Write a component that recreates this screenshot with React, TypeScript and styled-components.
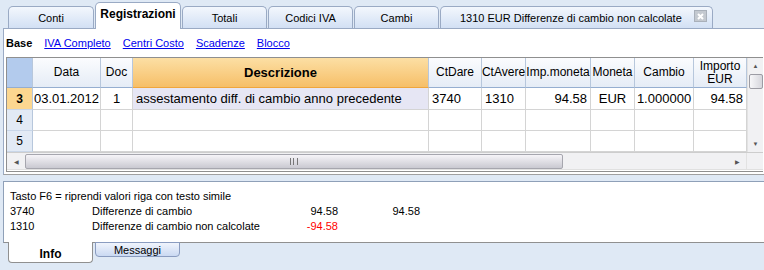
import React from 'react';
import styled, { createGlobalStyle, css } from 'styled-components';

const GlobalStyle = createGlobalStyle`
 html, body {
  margin: 0;
  padding: 0;
  background: #dfe9f5;
 }
 body {
  font-family: "Liberation Sans", Arial, sans-serif;
  color: #000;
 }
`;

const Screen = styled.div`
 width: 764px;
 height: 270px;
 overflow: hidden;
 background: #dfe9f5;
 display: flex;
 flex-direction: column;
`;

const TabBar = styled.div`
 display: flex;
 align-items: flex-end;
 height: 28px;
 padding-left: 8px;
 gap: 1px;
`;

const Tab = styled.div<{ $active?: boolean; $width: number }>`
 position: relative;
 box-sizing: border-box;
 width: ${p => p.$width}px;
 height: 22px;
 display: flex;
 align-items: center;
 justify-content: center;
 font-size: 11px;
 border: 1px solid #9aaac4;
 border-bottom: none;
 border-radius: 5px 5px 0 0;
 background: linear-gradient(#f3f7fd, #d2e0f4);
 ${p =>
  p.$active &&
  css`
   height: 27px;
   margin-bottom: -1px;
   background: #fff;
   font-weight: bold;
   font-size: 12px;
   padding-bottom: 4px;
   z-index: 1;
  `}
`;

const CloseBox = styled.span`
 position: absolute;
 right: 5px;
 top: 3px;
 width: 13px;
 height: 12px;
 box-sizing: border-box;
 border: 1px solid #a9b0ba;
 background: #c4c9d0;
 display: flex;
 align-items: center;
 justify-content: center;
`;

const Panel = styled.div`
 margin-left: 3px;
 height: 145px;
 background: #fff;
 border-top: 1px solid #9aaac4;
 border-left: 1px solid #9aaac4;
 border-bottom: 1px solid #a0a0a0;
 display: flex;
 flex-direction: column;
`;

const LinkBar = styled.div`
 display: flex;
 align-items: center;
 height: 28px;
 padding-left: 2px;
 gap: 12px;
 font-size: 11px;
`;

const BaseLabel = styled.span`
 font-weight: bold;
`;

const Link = styled.span`
 color: #0000ee;
 text-decoration: underline;
`;

const GridBox = styled.div`
 margin-left: 2px;
 width: 757px;
 height: 115px;
 box-sizing: border-box;
 border: 1px solid #8f8f8f;
 border-right: none;
 display: flex;
 flex-direction: column;
`;

const GridBody = styled.div`
 display: flex;
 height: 94px;
`;

const Table = styled.div`
 display: grid;
 grid-template-columns: 26px 68px 32px 296px 53px 44px 65px 44px 59px 53px;
 grid-template-rows: 30px 22px 21px 21px;
 width: 740px;
`;

const HeadCell = styled.div<{ $current?: boolean; $corner?: boolean }>`
 box-sizing: border-box;
 display: flex;
 align-items: center;
 justify-content: center;
 text-align: center;
 font-size: 12px;
 line-height: 13px;
 border-right: 1px solid #b7c7dc;
 border-bottom: 1px solid #95aed0;
 background: linear-gradient(#fbfcfe, #e5ecf6);
 ${p =>
  p.$current &&
  css`
   background: linear-gradient(#fcdfa4, #f6bf68);
   border-bottom: 1px solid #f0a63c;
   font-weight: bold;
   font-size: 13px;
  `}
 ${p =>
  p.$corner &&
  css`
   background: #b3cbed;
  `}
`;

const RowHead = styled.div<{ $current?: boolean }>`
 box-sizing: border-box;
 display: flex;
 align-items: center;
 justify-content: center;
 font-size: 12px;
 background: ${p => (p.$current ? '#fcd790' : '#e2eaf5')};
 font-weight: ${p => (p.$current ? 'bold' : 'normal')};
 border-bottom: 1px solid #c9d6e8;
 border-right: 1px solid #b7c7dc;
`;

const Cell = styled.div<{ $align?: 'left' | 'right' | 'center'; $focus?: boolean }>`
 box-sizing: border-box;
 display: flex;
 align-items: center;
 padding: 0 3px;
 font-size: 13px;
 white-space: nowrap;
 overflow: hidden;
 justify-content: ${p =>
  p.$align === 'right' ? 'flex-end' : p.$align === 'center' ? 'center' : 'flex-start'};
 background: ${p => (p.$focus ? '#e6e6f4' : '#fff')};
 border-right: 1px solid #d4d4d4;
 border-bottom: 1px solid #d4d4d4;
`;

const VScroll = styled.div`
 width: 16px;
 display: flex;
 flex-direction: column;
 align-items: center;
 background: #f1f1f3;
 border-left: 1px solid #e2e2e2;
`;

const Arrow = styled.div`
 height: 16px;
 display: flex;
 align-items: center;
 justify-content: center;
 font-size: 6px;
 color: #555;
`;

const VThumb = styled.div`
 width: 14px;
 height: 15px;
 box-sizing: border-box;
 border: 1px solid #9c9ca4;
 border-radius: 2px;
 background: linear-gradient(90deg, #f7f7f9, #d6d6dc);
`;

const VTrack = styled.div`
 flex: 1;
`;

const HScrollRow = styled.div`
 display: flex;
 height: 16px;
 border-top: 1px solid #cdcdcd;
 border-bottom: 1px solid #e0e0e0;
`;

const HScroll = styled.div`
 flex: 1;
 display: flex;
 align-items: center;
 background: #f1f1f3;
`;

const HThumb = styled.div`
 width: 538px;
 height: 15px;
 box-sizing: border-box;
 border: 1px solid #a6a6ae;
 border-radius: 2px;
 background: linear-gradient(#f6f4f8, #c9c9d1);
 display: flex;
 align-items: center;
 justify-content: center;
`;

const Grip = styled.span`
 width: 6px;
 height: 7px;
 border-left: 1px solid #777;
 border-right: 1px solid #777;
 position: relative;
 &::after {
  content: '';
  position: absolute;
  left: 2px;
  top: 0;
  height: 7px;
  border-left: 1px solid #777;
 }
`;

const HArrow = styled.div`
 width: 18px;
 display: flex;
 align-items: center;
 justify-content: center;
 font-size: 6px;
 color: #555;
`;

const Corner = styled.div`
 width: 16px;
 background: #f1f1f3;
 border-left: 1px solid #e2e2e2;
`;

const Gap = styled.div`
 height: 6px;
`;

const InfoPanel = styled.div`
 margin-left: 3px;
 height: 62px;
 box-sizing: border-box;
 background: #fff;
 border-top: 1px solid #8fa0b8;
 border-left: 1px solid #8fa0b8;
 border-bottom: 1px solid #909090;
 padding: 6px 0 0 6px;
 font-size: 11px;
`;

const InfoLine = styled.div`
 display: grid;
 grid-template-columns: 82px 170px 76px 82px;
 height: 15px;
 align-items: center;
`;

const Amount = styled.span<{ $neg?: boolean }>`
 text-align: right;
 color: ${p => (p.$neg ? '#ff0000' : '#000')};
`;

const BottomTabs = styled.div`
 display: flex;
 padding-left: 8px;
 gap: 2px;
 margin-top: -1px;
`;

const BottomTab = styled.div<{ $active?: boolean }>`
 box-sizing: border-box;
 width: 85px;
 height: ${p => (p.$active ? 21 : 15)}px;
 display: flex;
 align-items: center;
 justify-content: center;
 font-size: ${p => (p.$active ? 12 : 11)}px;
 font-weight: ${p => (p.$active ? 'bold' : 'normal')};
 padding-top: ${p => (p.$active ? 3 : 0)}px;
 background: ${p => (p.$active ? '#fff' : 'linear-gradient(#f0f4fc, #cad9f2)')};
 border: 1px solid ${p => (p.$active ? '#909090' : '#8a9cc0')};
 border-top: ${p => (p.$active ? 'none' : '1px solid #8a9cc0')};
 border-radius: 0 0 4px 4px;
`;

const topTabs = [
 { label: 'Conti', width: 86 },
 { label: 'Registrazioni', width: 86, active: true },
 { label: 'Totali', width: 85 },
 { label: 'Codici IVA', width: 85 },
 { label: 'Cambi', width: 85 },
];

const columns = ['Data', 'Doc', 'Descrizione', 'CtDare', 'CtAvere', 'Imp.moneta', 'Moneta', 'Cambio'];

const App: React.FC = () => {
 return (
  <Screen>
   <GlobalStyle />
   <TabBar>
    {topTabs.map(t => (
     <Tab key={t.label} $width={t.width} $active={t.active}>
      {t.label}
     </Tab>
    ))}
    <Tab $width={273} style={{ justifyContent: 'flex-start', paddingLeft: 19 }}>
     1310 EUR Differenze di cambio non calcolate
     <CloseBox>
      <svg width="7" height="7" viewBox="0 0 7 7">
       <path d="M1 1L6 6M6 1L1 6" stroke="#fff" strokeWidth="2" />
      </svg>
     </CloseBox>
    </Tab>
   </TabBar>
   <Panel>
    <LinkBar>
     <BaseLabel>Base</BaseLabel>
     <Link>IVA Completo</Link>
     <Link>Centri Costo</Link>
     <Link>Scadenze</Link>
     <Link>Blocco</Link>
    </LinkBar>
    <GridBox>
     <GridBody>
      <Table>
       <HeadCell $corner />
       {columns.map(c => (
        <HeadCell key={c} $current={c === 'Descrizione'}>
         {c}
        </HeadCell>
       ))}
       <HeadCell>
        Importo
        <br />
        EUR
       </HeadCell>

       <RowHead $current>3</RowHead>
       <Cell $align="center">03.01.2012</Cell>
       <Cell $align="center">1</Cell>
       <Cell $focus>assestamento diff. di cambio anno precedente</Cell>
       <Cell>3740</Cell>
       <Cell>1310</Cell>
       <Cell $align="right">94.58</Cell>
       <Cell $align="center">EUR</Cell>
       <Cell $align="center">1.000000</Cell>
       <Cell $align="right">94.58</Cell>

       {[4, 5].map(n => (
        <React.Fragment key={n}>
         <RowHead>{n}</RowHead>
         {Array.from({ length: 9 }).map((_, i) => (
          <Cell key={i} />
         ))}
        </React.Fragment>
       ))}
      </Table>
      <VScroll>
       <Arrow>▲</Arrow>
       <VThumb />
       <VTrack />
       <Arrow>▼</Arrow>
      </VScroll>
     </GridBody>
     <HScrollRow>
      <HScroll>
       <HArrow>◀</HArrow>
       <HThumb>
        <Grip />
       </HThumb>
       <VTrack />
       <HArrow>▶</HArrow>
      </HScroll>
      <Corner />
     </HScrollRow>
    </GridBox>
   </Panel>
   <Gap />
   <InfoPanel>
    <InfoLine>
     <span style={{ gridColumn: '1 / 5' }}>Tasto F6 = riprendi valori riga con testo simile</span>
    </InfoLine>
    <InfoLine>
     <span>3740</span>
     <span>Differenze di cambio</span>
     <Amount>94.58</Amount>
     <Amount>94.58</Amount>
    </InfoLine>
    <InfoLine>
     <span>1310</span>
     <span>Differenze di cambio non calcolate</span>
     <Amount $neg>-94.58</Amount>
     <span />
    </InfoLine>
   </InfoPanel>
   <BottomTabs>
    <BottomTab $active>Info</BottomTab>
    <BottomTab>Messaggi</BottomTab>
   </BottomTabs>
  </Screen>
 );
};

export default App;
